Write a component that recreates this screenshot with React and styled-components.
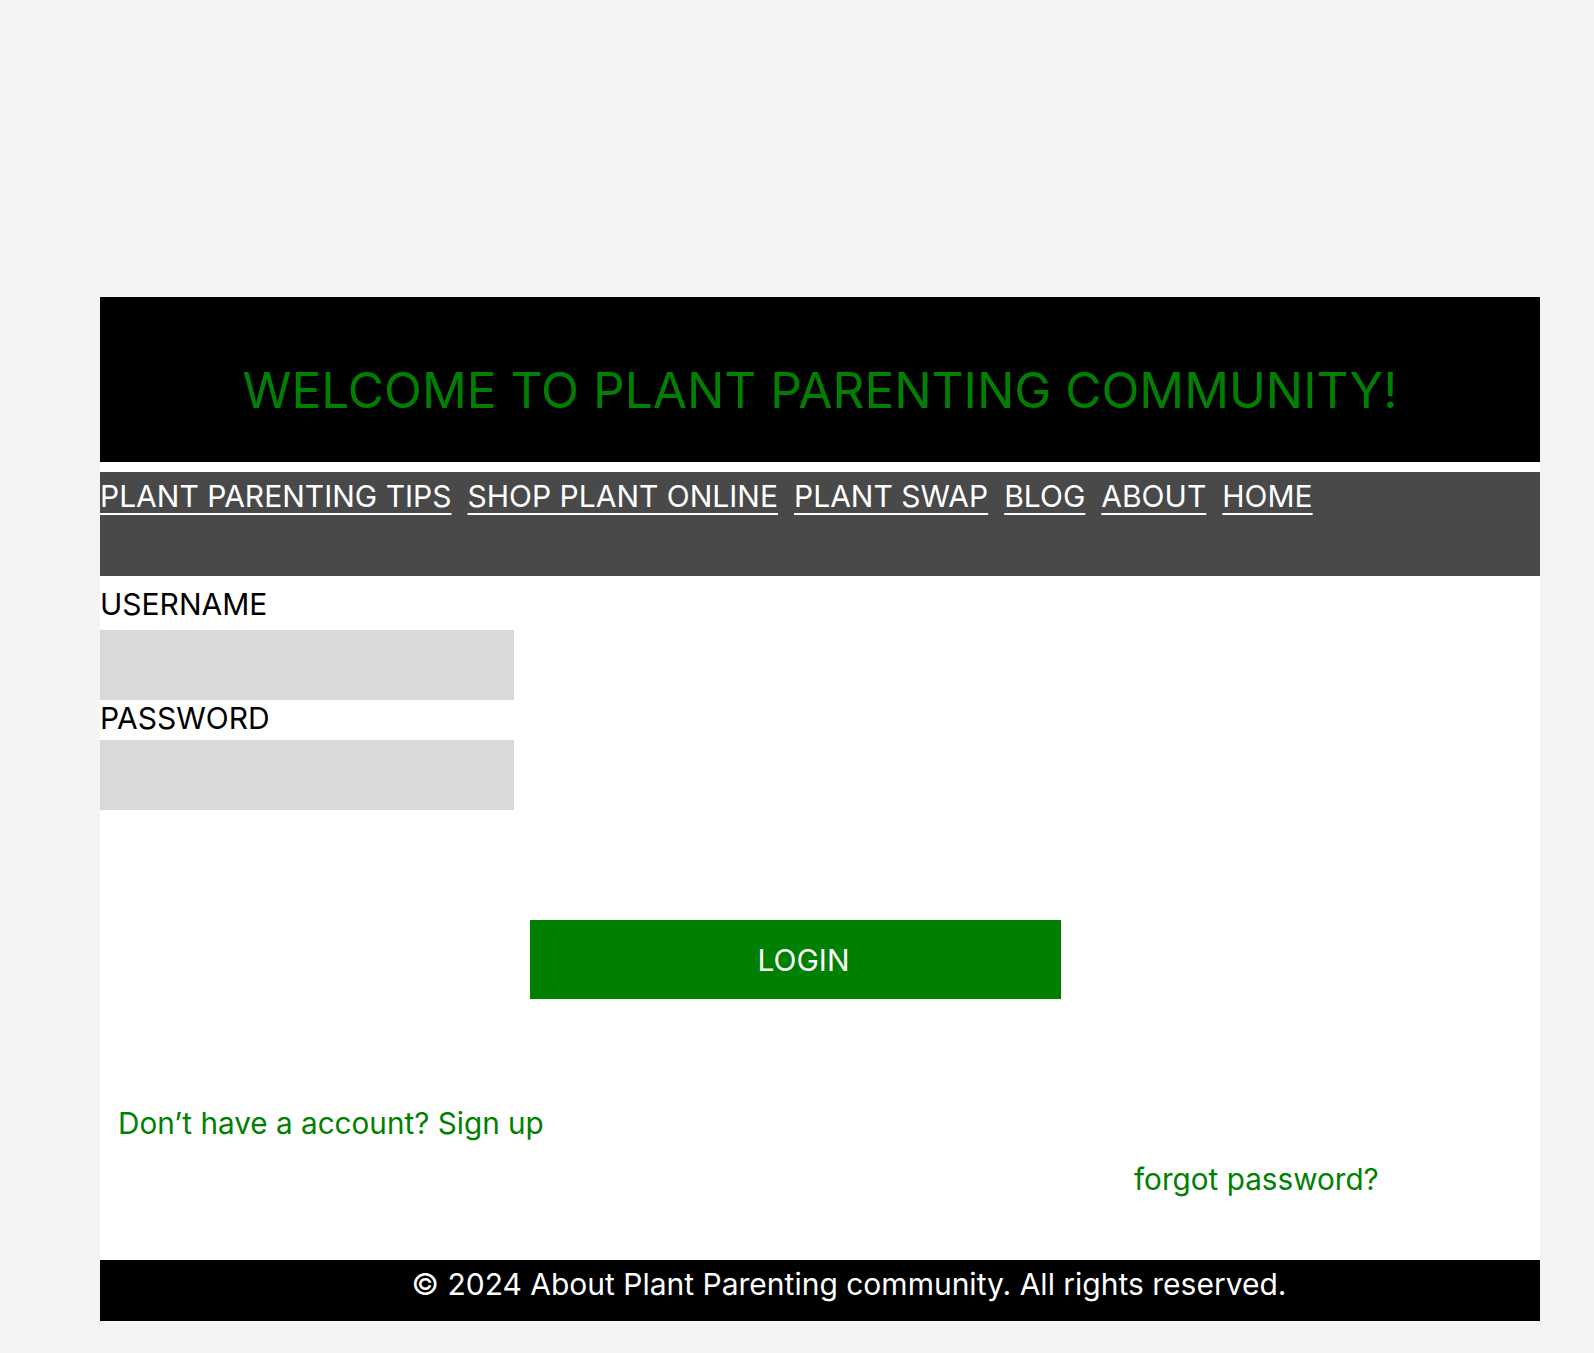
import React from "react";
import styled, { createGlobalStyle } from "styled-components";

const GlobalStyle = createGlobalStyle`
	body {
		margin: 0;
		background-color: #F4F4F4;
		font-family: Inter, "Noto Sans", sans-serif;
	}
`;

const Page = styled.div`
	padding: 297px 0 32px 100px;
`;

const Container = styled.div`
	width: 1440px;
	background-color: #fff;
	display: flex;
	flex-direction: column;
`;

const Header = styled.header`
	height: 165px;
	box-sizing: border-box;
	padding-top: 20px;
	background-color: #000;
	display: flex;
	align-items: center;
	justify-content: center;
	h1 {
		margin: 0;
		font-size: 49.6px;
		font-weight: 400;
		color: #008000;
	}
`;

const Nav = styled.nav`
	margin-top: 10px;
	height: 104px;
	box-sizing: border-box;
	padding-top: 7px;
	background-color: #494949;
	display: flex;
	align-items: flex-start;
	gap: 16px;
	a {
		color: #fff;
		font-size: 30px;
		line-height: 35px;
		text-decoration: underline;
		text-underline-offset: 6px;
		text-decoration-thickness: 2px;
	}
`;

const Form = styled.form`
	padding-top: 10px;
	display: flex;
	flex-direction: column;
	align-items: flex-start;
`;

const Label = styled.label`
	font-size: 30px;
	line-height: 36px;
	color: #000;
	margin-bottom: ${props => props.gap}px;
`;

const Input = styled.input`
	width: 414px;
	height: 70px;
	box-sizing: border-box;
	border: none;
	background-color: #D9D9D9;
	font-size: 24px;
	font-family: inherit;
	padding: 0 12px;
	outline: none;
`;

const LoginButton = styled.button`
	margin: 110px 0 0 430px;
	width: 531px;
	height: 79px;
	border: none;
	background-color: #008000;
	color: #fff;
	font-family: inherit;
	font-size: 30px;
	padding-left: 22px;
	cursor: pointer;
`;

const Links = styled.div`
	padding: 106px 0 63px;
	display: flex;
	flex-direction: column;
	align-items: flex-start;
`;

const TextLink = styled.a`
	font-size: 29.7px;
	line-height: 36px;
	color: #008000;
	text-decoration: none;
	margin-left: ${props => props.left}px;
	margin-top: ${props => props.top || 0}px;
`;

const Footer = styled.footer`
	height: 61px;
	box-sizing: border-box;
	padding: 6px 0 0 58px;
	background-color: #000;
	color: #fff;
	font-size: 30px;
	line-height: 36px;
	text-align: center;
`;

export default function App() {
	return (
		<>
			<GlobalStyle />
			<Page>
				<Container>
					<Header>
						<h1>WELCOME TO PLANT PARENTING COMMUNITY!</h1>
					</Header>
					<Nav>
						<a href="#">PLANT PARENTING TIPS</a>
						<a href="#">SHOP PLANT ONLINE</a>
						<a href="#">PLANT SWAP</a>
						<a href="#">BLOG</a>
						<a href="#">ABOUT</a>
						<a href="#">HOME</a>
					</Nav>
					<Form onSubmit={e => e.preventDefault()}>
						<Label gap={8} htmlFor="username">USERNAME</Label>
						<Input id="username" type="text" />
						<Label gap={4} htmlFor="password">PASSWORD</Label>
						<Input id="password" type="password" />
						<LoginButton type="submit">LOGIN</LoginButton>
					</Form>
					<Links>
						<TextLink href="#" left={18}>Don’t have a account? Sign up</TextLink>
						<TextLink href="#" left={1034} top={20}>forgot password?</TextLink>
					</Links>
					<Footer>© 2024 About Plant Parenting community. All rights reserved.</Footer>
				</Container>
			</Page>
		</>
	);
}
